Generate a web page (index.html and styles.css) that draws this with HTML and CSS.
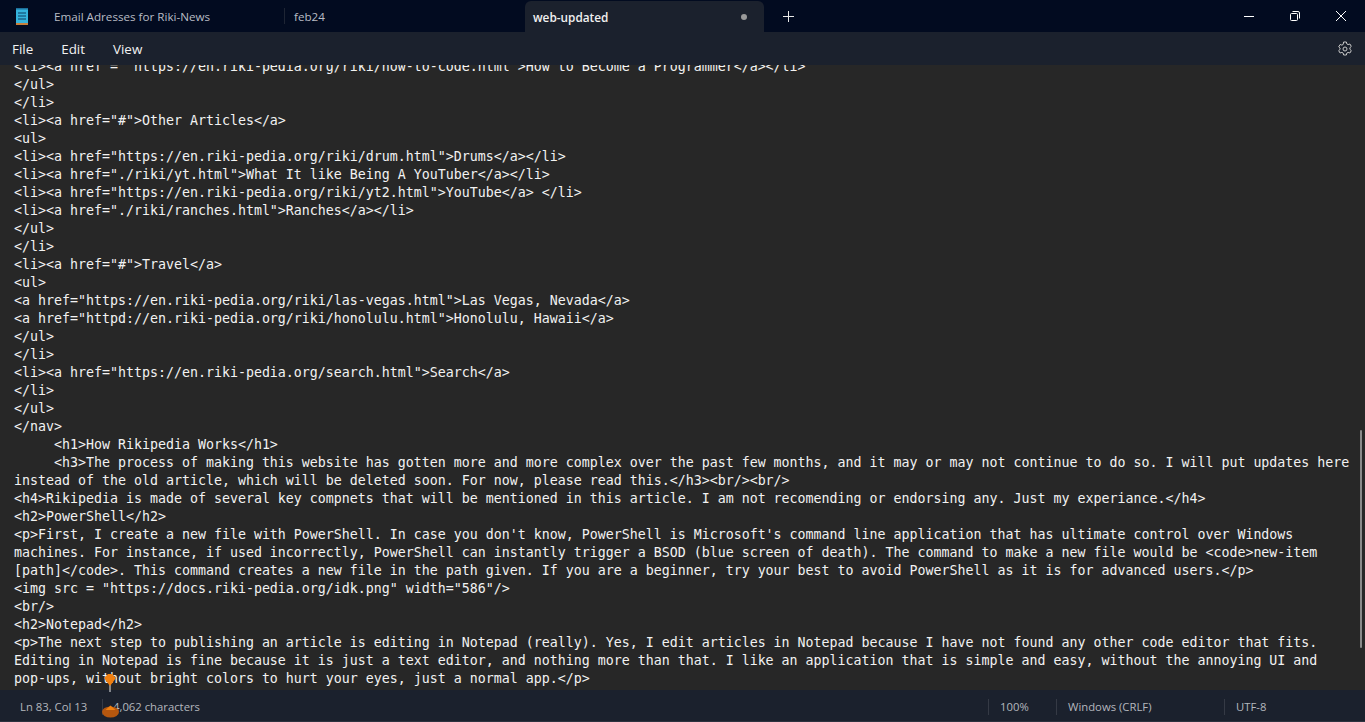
FILE: index.html
```html
<!DOCTYPE html>
<html lang="en">
<head>
<meta charset="utf-8">
<title>web-updated - Notepad</title>
<link rel="stylesheet" href="styles.css">
</head>
<body>
<div class="window">
  <header class="titlebar">
    <svg class="app-icon" width="14" height="17" viewBox="0 0 14 17">
      <rect x="1" y="1" width="12" height="14" fill="#35b3dc"/>
      <rect x="1" y="15" width="12" height="2" fill="#c9803a"/>
      <rect x="1" y="0" width="12" height="1.500" fill="#1c6f9a"/>
      <path d="M3 5h8M3 8h8M3 11h8" stroke="#0d3f63" stroke-width="1"/>
    </svg>
    <div class="tab tab-first">Email Adresses for Riki-News</div>
    <div class="tab tab-second">feb24</div>
    <div class="tab tab-active"><span class="tab-name">web-updated</span><span class="dot"></span></div>
    <svg class="plus" width="11" height="11" viewBox="0 0 11 11"><path d="M5.500 0v11M0 5.500h11" stroke="#e8e8e8" stroke-width="1"/></svg>
    <div class="controls">
      <svg class="ctl" width="12" height="12" viewBox="0 0 12 12"><path d="M1 6.500h10" stroke="#fff" stroke-width="1"/></svg>
      <svg class="ctl" width="12" height="12" viewBox="0 0 12 12"><rect x="1.500" y="3.500" width="7" height="7" rx="1" fill="none" stroke="#fff"/><path d="M3.500 1.500h5.500a1.500 1.500 0 0 1 1.500 1.500v5.500" fill="none" stroke="#fff"/></svg>
      <svg class="ctl" width="12" height="12" viewBox="0 0 12 12"><path d="M1 1l10 10M11 1L1 11" stroke="#fff" stroke-width="1"/></svg>
    </div>
  </header>
  <nav class="menubar">
    <span class="menu-item">File</span>
    <span class="menu-item">Edit</span>
    <span class="menu-item">View</span>
    <svg class="gear" width="16" height="16" viewBox="0 0 16 16" fill="none" stroke="#c8c8c8" stroke-width="1">
      <path d="M6.600 1h2.800l.4 1.900 1.300.7 1.800-.6 1.400 2.400-1.400 1.300v1.600l1.400 1.300-1.400 2.400-1.800-.6-1.300.7-.4 1.900H6.600l-.4-1.900-1.300-.7-1.800.6-1.400-2.400 1.400-1.300V7.200L1.700 5.900l1.400-2.400 1.800.6 1.300-.7z"/>
      <circle cx="8" cy="8" r="2"/>
    </svg>
  </nav>
  <main class="editor">
<pre class="text">&lt;li&gt;&lt;a href = "https://en.riki-pedia.org/riki/how-to-code.html"&gt;How to Become a Programmer&lt;/a&gt;&lt;/li&gt;
&lt;/ul&gt;
&lt;/li&gt;
&lt;li&gt;&lt;a href="#"&gt;Other Articles&lt;/a&gt;
&lt;ul&gt;
&lt;li&gt;&lt;a href="https://en.riki-pedia.org/riki/drum.html"&gt;Drums&lt;/a&gt;&lt;/li&gt;
&lt;li&gt;&lt;a href="./riki/yt.html"&gt;What It like Being A YouTuber&lt;/a&gt;&lt;/li&gt;
&lt;li&gt;&lt;a href="https://en.riki-pedia.org/riki/yt2.html"&gt;YouTube&lt;/a&gt; &lt;/li&gt;
&lt;li&gt;&lt;a href="./riki/ranches.html"&gt;Ranches&lt;/a&gt;&lt;/li&gt;
&lt;/ul&gt;
&lt;/li&gt;
&lt;li&gt;&lt;a href="#"&gt;Travel&lt;/a&gt;
&lt;ul&gt;
&lt;a href="https://en.riki-pedia.org/riki/las-vegas.html"&gt;Las Vegas, Nevada&lt;/a&gt;
&lt;a href="httpd://en.riki-pedia.org/riki/honolulu.html"&gt;Honolulu, Hawaii&lt;/a&gt;
&lt;/ul&gt;
&lt;/li&gt;
&lt;li&gt;&lt;a href="https://en.riki-pedia.org/search.html"&gt;Search&lt;/a&gt;
&lt;/li&gt;
&lt;/ul&gt;
&lt;/nav&gt;
     &lt;h1&gt;How Rikipedia Works&lt;/h1&gt;
     &lt;h3&gt;The process of making this website has gotten more and more complex over the past few months, and it may or may not continue to do so. I will put updates here
instead of the old article, which will be deleted soon. For now, please read this.&lt;/h3&gt;&lt;br/&gt;&lt;br/&gt;
&lt;h4&gt;Rikipedia is made of several key compnets that will be mentioned in this article. I am not recomending or endorsing any. Just my experiance.&lt;/h4&gt;
&lt;h2&gt;PowerShell&lt;/h2&gt;
&lt;p&gt;First, I create a new file with PowerShell. In case you don't know, PowerShell is Microsoft's command line application that has ultimate control over Windows
machines. For instance, if used incorrectly, PowerShell can instantly trigger a BSOD (blue screen of death). The command to make a new file would be &lt;code&gt;new-item
[path]&lt;/code&gt;. This command creates a new file in the path given. If you are a beginner, try your best to avoid PowerShell as it is for advanced users.&lt;/p&gt;
&lt;img src = "https://docs.riki-pedia.org/idk.png" width="586"/&gt;
&lt;br/&gt;
&lt;h2&gt;Notepad&lt;/h2&gt;
&lt;p&gt;The next step to publishing an article is editing in Notepad (really). Yes, I edit articles in Notepad because I have not found any other code editor that fits.
Editing in Notepad is fine because it is just a text editor, and nothing more than that. I like an application that is simple and easy, without the annoying UI and
pop-ups, without bright colors to hurt your eyes, just a normal app.&lt;/p&gt;</pre>
    <div class="scrollbar"></div>
  </main>
  <footer class="statusbar">
    <span class="cell cell-pos">Ln 83, Col 13</span>
    <span class="cell cell-count">4,062 characters</span>
    <span class="cell cell-zoom">100%</span>
    <span class="cell cell-eol">Windows (CRLF)</span>
    <span class="cell cell-enc">UTF-8</span>
  </footer>
  <svg class="marker marker-top" width="14" height="19" viewBox="0 0 14 19">
    <path d="M7 12v7" stroke="#e8e8e8" stroke-width="1"/>
    <path d="M1 5l4-4h4l4 4-6 8z" fill="#f08010"/>
  </svg>
  <svg class="marker marker-bottom" width="18" height="14" viewBox="0 0 18 14">
    <ellipse cx="8.500" cy="8" rx="8.500" ry="5.500" fill="#b5570f"/>
    <path d="M3.500 6l5-4.500 5 4.500z" fill="#f08010"/>
  </svg>
</div>
</body>
</html>
```
FILE: styles.css
```css
* { box-sizing: border-box; }
html, body { margin: 0; height: 100%; overflow: hidden; }
body { font-family: "Open Sans", "Noto Sans", sans-serif; background: #272727; }
.window { position: relative; display: flex; flex-direction: column; width: 1365px; height: 722px; }

.titlebar { display: flex; align-items: center; height: 32px; background: #020b20; flex: none; }
.app-icon { margin-left: 15px; flex: none; }
.tab { font-size: 11.650px; color: #b8bcc4; white-space: nowrap; }
.tab-first { width: 230px; margin-left: 25px; }
.tab-second { width: 241px; padding-left: 9px; border-left: 1px solid #1e2534; height: 16px; line-height: 17px; }
.tab-active { display: flex; align-items: center; justify-content: space-between; align-self: flex-end; width: 239px; height: 31px; padding: 0 17px 0 8px; background: #1b212d; border-radius: 6px 6px 0 0; color: #f0f0f0; font-weight: 600; font-size: 11.800px; }
.dot { width: 6px; height: 6px; border-radius: 50%; background: #9a9a9a; }
.plus { margin-left: 19px; }
.controls { display: flex; gap: 34px; margin-left: auto; margin-right: 18px; }
.ctl { display: block; }

.menubar { display: flex; align-items: center; height: 33px; padding-left: 12px; background: #1b212d; color: #f2f2f2; font-size: 13.400px; flex: none; }
.menu-item { margin-right: 28px; }
.gear { margin-left: auto; margin-right: 12px; }

.editor { position: relative; flex: 1; min-height: 0; overflow: hidden; background: #272727; }
.text { margin: -7px 0 0 14px; font-family: "DejaVu Sans Mono", "Liberation Mono", monospace; font-size: 13.290px; line-height: 18px; color: #f2f2f2; white-space: pre; }
.scrollbar { position: absolute; right: 3px; top: 365px; width: 2px; height: 218px; background: #8a8a8a; border-radius: 1px; }

.statusbar { display: flex; align-items: center; height: 32px; padding-top: 2px; background: #1b212d; color: #b4b7bd; font-size: 11.300px; flex: none; border-bottom: 1px solid #2d3340; }
.cell { display: flex; align-items: center; height: 16px; padding-left: 11px; white-space: nowrap; }
.cell-pos { width: 102px; padding-left: 20px; }
.cell-count { width: 886px; border-left: 1px solid #353a45; padding-left: 10px; }
.cell-zoom { width: 68px; border-left: 1px solid #353a45; }
.cell-eol { width: 168px; border-left: 1px solid #353a45; }
.cell-enc { border-left: 1px solid #353a45; }

.marker { position: absolute; display: block; }
.marker-top { left: 103px; top: 673px; }
.marker-bottom { left: 102px; top: 704px; }
```
